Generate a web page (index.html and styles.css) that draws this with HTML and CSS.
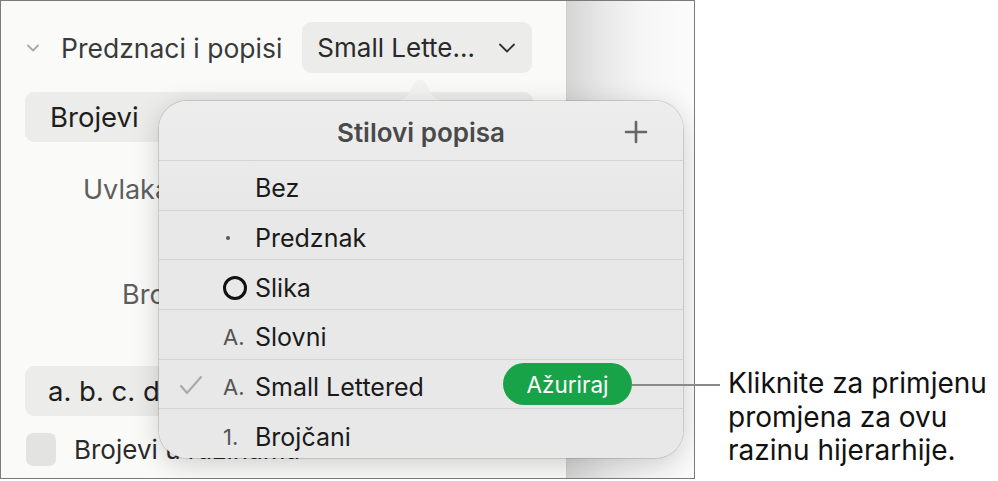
FILE: index.html
```html
<!DOCTYPE html>
<html lang="hr">
<head>
    <meta charset="UTF-8">
    <title>Stilovi popisa</title>
    <link rel="stylesheet" href="styles.css">
</head>
<body>
    <div class="frame">
        <div class="sidebar">
            <div class="section-head">
                <svg class="disclosure" width="14" height="10" viewBox="0 0 14 10"><path d="M2 2.5 L7 7.5 L12 2.5" fill="none" stroke="#a9a9a9" stroke-width="1.8" stroke-linecap="round" stroke-linejoin="round"/></svg>
                <span class="section-title">Predznaci i popisi</span>
                <div class="popup-button">
                    <span>Small Lette…</span>
                    <svg width="18" height="12" viewBox="0 0 18 12"><path d="M2 2.5 L9 9.5 L16 2.5" fill="none" stroke="#333" stroke-width="1.8" stroke-linecap="round" stroke-linejoin="round"/></svg>
                </div>
            </div>
            <div class="field-box">Brojevi</div>
            <div class="label label-indent">Uvlaka</div>
            <div class="label label-number">Broj</div>
            <div class="field-box field-low">a. b. c. d.</div>
            <div class="check-row">
                <span class="checkbox"></span>
                <span>Brojevi u razinama</span>
            </div>
        </div>
        <div class="canvas-edge"></div>

        <!-- popover over the sidebar -->
        <svg class="popover-arrow" width="60" height="26" viewBox="0 0 60 26"><path d="M0 25 C14 25 18 20 23 8 C26 1 34 1 37 8 C42 20 46 25 60 25 Z" fill="#f3f3f3"/></svg>
        <div class="popover">
            <div class="popover-head">
                <span class="popover-title">Stilovi popisa</span>
                <svg class="plus" width="24" height="24" viewBox="0 0 24 24"><path d="M12 2 V22 M2 12 H22" stroke="#666" stroke-width="2.6" stroke-linecap="round"/></svg>
            </div>
            <div class="style-row"><span class="check"></span><span class="marker"></span><span class="name">Bez</span></div>
            <div class="style-row"><span class="check"></span><span class="marker"><span class="dot"></span></span><span class="name">Predznak</span></div>
            <div class="style-row"><span class="check"></span><span class="marker"><span class="ring"></span></span><span class="name">Slika</span></div>
            <div class="style-row"><span class="check"></span><span class="marker">A.</span><span class="name">Slovni</span></div>
            <div class="style-row">
                <span class="check"><svg width="24" height="20" viewBox="0 0 24 20"><path d="M2 11 L8 18 L22 2" fill="none" stroke="#aaa" stroke-width="2.2" stroke-linecap="round" stroke-linejoin="round"/></svg></span>
                <span class="marker">A.</span><span class="name">Small Lettered</span>
                <span class="update">Ažuriraj</span>
            </div>
            <div class="style-row"><span class="check"></span><span class="marker">1.</span><span class="name">Brojčani</span></div>
        </div>
    </div>

    <div class="callout-line"></div>
    <div class="callout">Kliknite za primjenu promjena za ovu razinu hijerarhije.</div>
</body>
</html>
```
FILE: styles.css
```css
body {
    margin: 0;
    background-color: white;
    font-family: Inter, "Noto Sans", sans-serif;
    display: flex;
    align-items: flex-start;
}

.frame {
    position: relative;
    width: 693px;
    height: 477px;
    border: 1px solid #7a7a7a;
    display: flex;
    overflow: hidden;
    flex-shrink: 0;
}

.sidebar {
    width: 566px;
    background-color: #fafaf9;
    border-right: 1px solid #cfcfcf;
    padding-left: 24px;
    box-sizing: border-box;
}

.canvas-edge {
    flex: 1;
    background: linear-gradient(to right, #d5d5d5, #e9e9e9 30%, #f6f6f6 60%, #fbfbfb);
}

.section-head {
    display: flex;
    align-items: center;
    height: 51px;
    margin-top: 21px;
}

.disclosure {
    margin-left: 1px;
}

.section-title {
    margin-left: 21px;
    font-size: 26.5px;
    color: #3a3a3a;
    white-space: nowrap;
}

.popup-button {
    margin-left: 20px;
    width: 230px;
    height: 51px;
    box-sizing: border-box;
    padding: 0 16px 0 15px;
    background-color: #ececeb;
    border-radius: 9px;
    display: flex;
    align-items: center;
    justify-content: space-between;
    font-size: 26px;
    color: #2a2a2a;
    white-space: nowrap;
}

.field-box {
    margin-top: 19px;
    width: 508px;
    height: 50px;
    box-sizing: border-box;
    padding-left: 25px;
    background-color: #ececeb;
    border-radius: 9px;
    display: flex;
    align-items: center;
    font-size: 27.5px;
    color: #1e1e1e;
}

.label {
    font-size: 27px;
    color: #5e5e5e;
    height: 30px;
    line-height: 30px;
}

.label-indent {
    margin-top: 33px;
    padding-left: 58px;
}

.label-number {
    margin-top: 75px;
    padding-left: 97px;
}

.field-low {
    margin-top: 56px;
    padding-left: 23px;
}

.check-row {
    margin-top: 17px;
    display: flex;
    align-items: center;
    gap: 18px;
    font-size: 26px;
    color: #2a2a2a;
}

.checkbox {
    width: 30px;
    height: 33px;
    margin-left: 1px;
    background-color: #e3e3e2;
    border-radius: 7px;
}

.popover-arrow {
    position: absolute;
    left: 389px;
    top: 76px;
}

.popover {
    position: absolute;
    left: 158px;
    top: 100px;
    width: 524px;
    height: 357px;
    background: linear-gradient(to bottom, #ededed, #e8e8e8 30%);
    border-radius: 28px;
    box-shadow: 0 0 0 1px rgba(0, 0, 0, 0.12), 0 6px 28px rgba(0, 0, 0, 0.18);
    display: flex;
    flex-direction: column;
    overflow: hidden;
}

.popover-head {
    height: 59px;
    flex-shrink: 0;
    display: flex;
    align-items: center;
    justify-content: center;
    position: relative;
}

.popover-title {
    font-size: 26px;
    font-weight: 600;
    color: #4a4a4a;
    padding-top: 3px;
}

.plus {
    position: absolute;
    right: 35px;
    top: 19px;
}

.style-row {
    flex: 1;
    border-top: 1px solid #d3d3d3;
    display: flex;
    align-items: center;
    padding-left: 20px;
    font-size: 25px;
    color: #1a1a1a;
}

.name {
    padding-top: 6px;
}

.check {
    width: 44px;
    padding-top: 2px;
    display: flex;
    align-items: center;
}

.marker {
    width: 32px;
    color: #555;
    font-size: 22px;
    padding-top: 6px;
    display: flex;
    align-items: center;
}

.dot {
    width: 4px;
    height: 4px;
    margin-left: 3px;
    border-radius: 50%;
    background-color: #555;
}

.ring {
    width: 18px;
    height: 18px;
    border: 3px solid #111;
    border-radius: 50%;
}

.update {
    margin-left: auto;
    margin-right: 51px;
    width: 129px;
    height: 42px;
    border-radius: 21px;
    background-color: #18a349;
    color: white;
    font-size: 22.5px;
    display: flex;
    align-items: center;
    justify-content: center;
}

.callout-line {
    position: absolute;
    left: 632px;
    top: 384px;
    width: 88px;
    height: 2px;
    background-color: #8a8a8a;
}

.callout {
    margin-top: 367px;
    margin-left: 33px;
    width: 262px;
    font-size: 28px;
    line-height: 33.5px;
    color: #111;
}
```
